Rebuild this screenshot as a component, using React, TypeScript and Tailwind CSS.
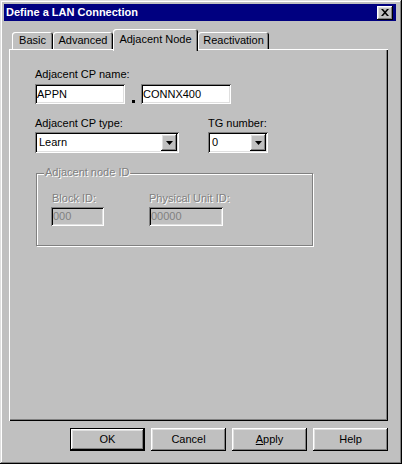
import React from 'react'

const raised =
  'shadow-[inset_-1px_-1px_#000,inset_1px_1px_#fff,inset_-2px_-2px_#808080,inset_2px_2px_#dfdfdf]'
const sunken =
  'shadow-[inset_1px_1px_#808080,inset_-1px_-1px_#fff,inset_2px_2px_#000,inset_-2px_-2px_#dfdfdf]'
const disabledText = 'text-[#808080] [text-shadow:1px_1px_0_#fff]'

function Arrow() {
  return (
    <svg width="7" height="4" viewBox="0 0 7 4">
      <path d="M0 0h7L3.5 4z" fill="#000" />
    </svg>
  )
}

function Combo({ value, width }: { value: string; width: string }) {
  return (
    <div className={`${width} h-[21px] bg-white ${sunken} p-[2px] flex`}>
      <span className="flex-1 pl-[2px] leading-[17px]">{value}</span>
      <div className={`w-[16px] h-[17px] bg-[#c0c0c0] ${raised} flex items-center justify-center`}>
        <Arrow />
      </div>
    </div>
  )
}

function Tab({ label, width, active }: { label: string; width: string; active?: boolean }) {
  const base = `${width} bg-[#c0c0c0] rounded-t-[3px] shadow-[inset_1px_1px_#fff,inset_-1px_0_#000,inset_-2px_0_#808080] flex items-center justify-center`
  if (active) {
    return <div className={`${base} h-[22px] -mb-[2px] pb-[2px] relative z-10`}>{label}</div>
  }
  return <div className={`${base} h-[17px]`}>{label}</div>
}

function PushButton({ children, isDefault }: { children: React.ReactNode; isDefault?: boolean }) {
  return (
    <div
      className={`w-[75px] h-[23px] bg-[#c0c0c0] ${raised} flex items-center justify-center ${
        isDefault ? 'border border-black' : ''
      }`}
    >
      {children}
    </div>
  )
}

export default function App() {
  return (
    <div className="w-[402px] h-[464px] bg-[#c0c0c0] pt-[4px] pl-[4px] pr-[6px] flex flex-col text-black text-[11px] leading-[13px] font-['Liberation_Sans',Arial,sans-serif] shadow-[inset_-1px_-1px_#000,inset_1px_1px_#dfdfdf,inset_-2px_-2px_#808080,inset_2px_2px_#fff]">
      {/* Title bar */}
      <div className="h-[17px] bg-[#000080] flex items-center justify-between pl-[2px] pr-[3px]">
        <span className="text-white font-bold">Define a LAN Connection</span>
        <div className={`w-[16px] h-[14px] bg-[#c0c0c0] ${raised} flex items-center justify-center`}>
          <svg width="8" height="7" viewBox="0 0 8 7">
            <path d="M0 0h2l2 2.2L6 0h2L5 3.5 8 7H6L4 4.8 2 7H0l3-3.5z" fill="#000" />
          </svg>
        </div>
      </div>

      <div className="flex flex-col pl-[5px] pr-[8px]">
        {/* Tabs */}
        <div className="mt-[8px] h-[20px] flex items-end pl-[3px]">
          <Tab label="Basic" width="w-[41px]" />
          <Tab label="Advanced" width="w-[60px]" />
          <Tab label="Adjacent Node" width="w-[85px]" active />
          <Tab label="Reactivation" width="w-[71px]" />
        </div>

        {/* Tab page */}
        <div className="h-[372px] bg-[#c0c0c0] shadow-[inset_1px_1px_#fff,inset_-1px_-1px_#000,inset_-2px_-2px_#808080] pl-[26px] pt-[19px] flex flex-col">
          <span>Adjacent CP name:</span>
          <div className="mt-[3px] flex items-end">
            <div className={`w-[90px] h-[20px] bg-white ${sunken} pl-[2px] flex items-center`}>APPN</div>
            <div className="w-[3px] h-[3px] bg-black ml-[7px] mr-[6px] mb-[1px]" />
            <div className={`w-[90px] h-[20px] bg-white ${sunken} pl-[2px] flex items-center`}>CONNX400</div>
          </div>

          <div className="mt-[13px] flex">
            <div className="flex flex-col">
              <span>Adjacent CP type:</span>
              <div className="mt-[2px]">
                <Combo value="Learn" width="w-[144px]" />
              </div>
            </div>
            <div className="flex flex-col ml-[29px]">
              <span>TG number:</span>
              <div className="mt-[2px]">
                <Combo value="0" width="w-[60px]" />
              </div>
            </div>
          </div>

          <div className="mt-[20px] ml-[1px] w-[277px] h-[73px] relative border border-[#808080] shadow-[1px_1px_0_#fff,inset_1px_1px_0_#fff] pl-[14px] pt-[18px] flex">
            <span className={`absolute left-[7px] -top-[8px] px-[1px] bg-[#c0c0c0] ${disabledText}`}>
              Adjacent node ID
            </span>
            <div className="flex flex-col">
              <span className={`pl-[1px] ${disabledText}`}>Block ID:</span>
              <div className={`mt-[2px] w-[53px] h-[19px] bg-[#c0c0c0] ${sunken} pl-[2px] flex items-center text-[#808080]`}>
                000
              </div>
            </div>
            <div className="flex flex-col ml-[45px]">
              <span className={disabledText}>Physical Unit ID:</span>
              <div className={`mt-[2px] w-[74px] h-[19px] bg-[#c0c0c0] ${sunken} pl-[2px] flex items-center text-[#808080]`}>
                00000
              </div>
            </div>
          </div>
        </div>

        {/* Buttons */}
        <div className="mt-[7px] flex justify-end gap-[6px]">
          <PushButton isDefault>OK</PushButton>
          <PushButton>Cancel</PushButton>
          <PushButton>
            <span>
              <span className="underline underline-offset-1">A</span>pply
            </span>
          </PushButton>
          <PushButton>Help</PushButton>
        </div>
      </div>
    </div>
  )
}
